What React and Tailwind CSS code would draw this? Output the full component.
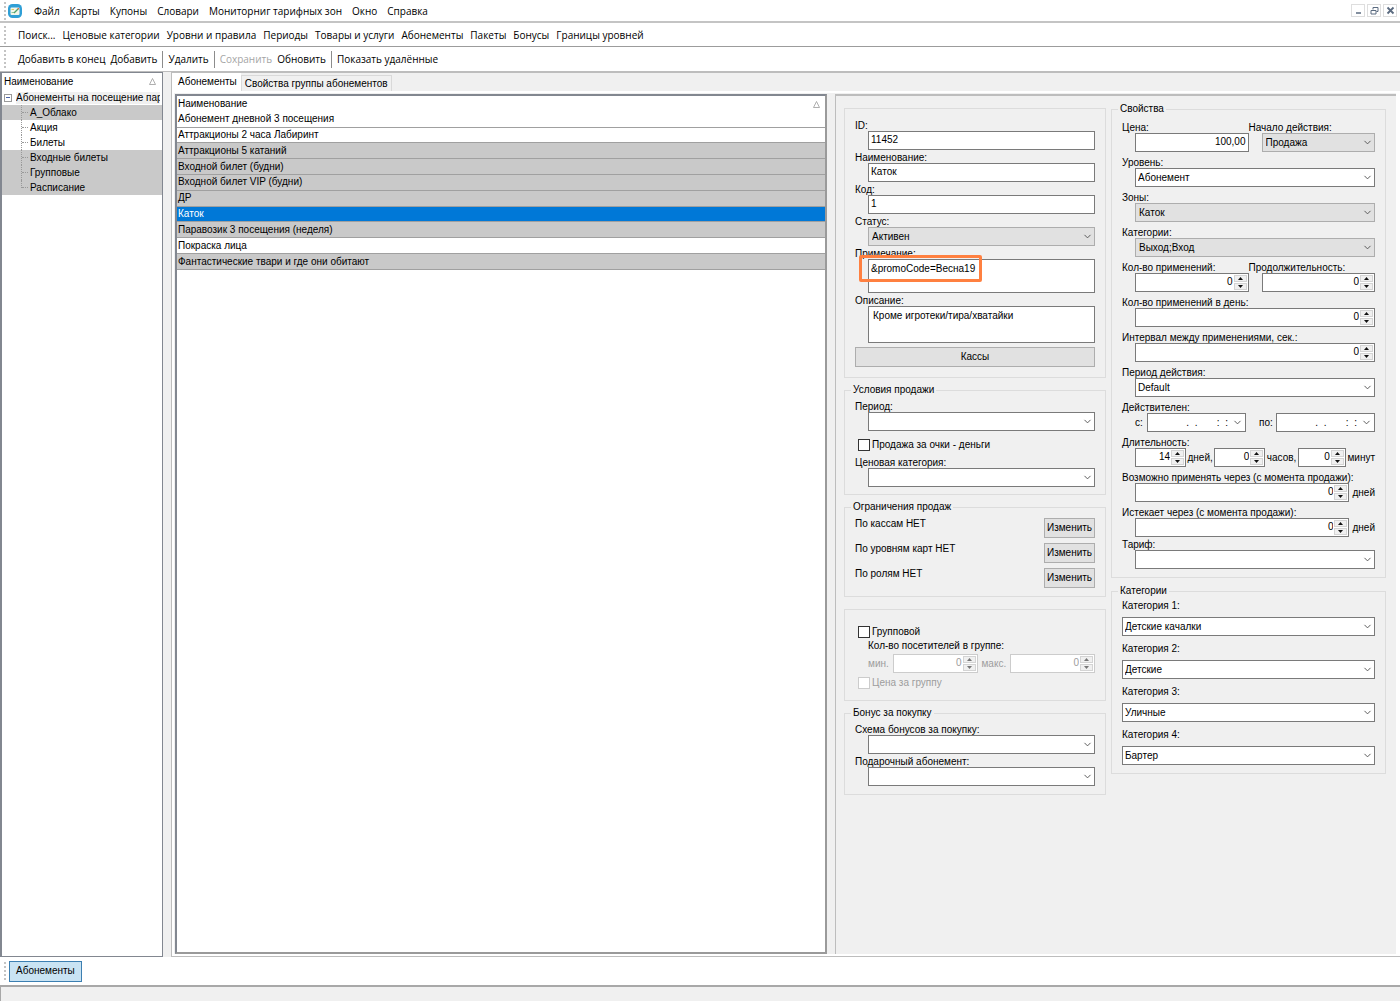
import React from "react";
import { ChevronDown } from "lucide-react";
import clsx from "clsx";

const MENU = ["Файл", "Карты", "Купоны", "Словари", "Мониторниг тарифных зон", "Окно", "Справка"];

const SECTIONS = [
  "Поиск...",
  "Ценовые категории",
  "Уровни и правила",
  "Периоды",
  "Товары и услуги",
  "Абонементы",
  "Пакеты",
  "Бонусы",
  "Границы уровней",
];

const TREE = [
  { name: "А_Облако", grey: true },
  { name: "Акция" },
  { name: "Билеты" },
  { name: "Входные билеты", grey: true },
  { name: "Групповые", grey: true },
  { name: "Расписание", grey: true },
];

const ROWS = [
  { name: "Абонемент дневной 3 посещения" },
  { name: "Аттракционы 2 часа Лабиринт" },
  { name: "Аттракционы 5 катаний", grey: true },
  { name: "Входной билет (будни)", grey: true },
  { name: "Входной билет VIP (будни)", grey: true },
  { name: "ДР", grey: true },
  { name: "Каток", selected: true },
  { name: "Паравозик 3 посещения (неделя)", grey: true },
  { name: "Покраска лица" },
  { name: "Фантастические твари и где они обитают", grey: true },
];

const LIMITS = ["По кассам НЕТ", "По уровням карт НЕТ", "По ролям НЕТ"];

const CATEGORIES = ["Детские качалки", "Детские", "Уличные", "Бартер"];

function Grip() {
  return <span className="ml-1 h-[18px] border-l-2 border-dotted border-[#c4c4c4]" />;
}

function Logo() {
  return (
    <svg width="14" height="14" viewBox="0 0 14 14" aria-hidden="true">
      <rect width="14" height="14" rx="4.5" fill="#2f9fd6" />
      <rect x="2.5" y="3.5" width="9" height="7.5" rx="1" fill="#f2f7ea" />
      <path d="M3.5 5.5h2.5" stroke="#e6c95c" />
      <path d="M3.5 8.5h3" stroke="#8fc7a0" />
      <path d="M6 9l4-4" stroke="#4f9f6a" strokeWidth="1.3" />
      <path d="M9.8 5.2l1-1" stroke="#d9643c" strokeWidth="1.3" />
    </svg>
  );
}

function SortMark() {
  return (
    <svg width="7" height="7" viewBox="0 0 7 7" aria-hidden="true">
      <path d="M3.5 0.5L6.5 6.5H0.5Z" fill="none" stroke="#9a9a9a" strokeWidth="0.8" />
    </svg>
  );
}

function WindowButton({ label, children }) {
  return (
    <button aria-label={label} className="flex h-[13px] w-[14px] items-center justify-center border border-[#dedede] bg-white">
      <svg width="9" height="9" viewBox="0 0 9 9" fill="none" stroke="#5b6b80">
        {children}
      </svg>
    </button>
  );
}

function ToolButton({ children, disabled }) {
  return (
    <button disabled={disabled} className="whitespace-nowrap disabled:text-[#a5a5a5]">
      {children}
    </button>
  );
}

function Divider() {
  return <span className="h-[17px] w-px bg-[#8c8c8c]" />;
}

// Label on top, control shifted to the right under it
function Field({ label, id, children }) {
  return (
    <div className="min-w-0">
      <label htmlFor={id} className="block h-[11px] whitespace-nowrap">
        {label}
      </label>
      <div className="ml-[13px] flex items-center">{children}</div>
    </div>
  );
}

function TextInput({ id, value, right }) {
  return (
    <input
      id={id}
      defaultValue={value}
      className={clsx("h-[19px] w-full min-w-0 border border-[#7a7a7a] bg-white px-0.5 pb-0.5", right && "text-right")}
    />
  );
}

function Select({ id, value = "", flat, label }) {
  return (
    <div className="relative w-full min-w-0">
      <select
        id={id}
        aria-label={label}
        defaultValue={value}
        className={clsx(
          "block h-[19px] w-full appearance-none border pr-4",
          flat ? "border-[#adadad] bg-[#e1e1e1] pl-[3px]" : "border-[#7a7a7a] bg-white pl-0.5"
        )}
      >
        <option>{value}</option>
      </select>
      <ChevronDown size={11} strokeWidth={2} color="#505050" className="pointer-events-none absolute top-1 right-0.5" />
    </div>
  );
}

function Spin({ id, value, label, disabled, className = "w-full" }) {
  return (
    <div className={clsx("flex h-[19px] min-w-0 border bg-white", disabled ? "border-[#cccccc]" : "border-[#7a7a7a]", className)}>
      <input
        id={id}
        aria-label={label}
        inputMode="numeric"
        defaultValue={value}
        disabled={disabled}
        className="w-0 flex-1 bg-white pr-px pb-0.5 text-right disabled:text-[#9d9d9d]"
      />
      <span className="flex w-[14px] flex-col gap-px py-px pr-px">
        <button aria-label="Больше" disabled={disabled} className="flex flex-1 items-center justify-center border border-[#d4d4d4] bg-[#f0f0f0]">
          <svg width="5" height="3" viewBox="0 0 5 3" fill={disabled ? "#777777" : "#111111"}>
            <path d="M2.5 0L5 3H0Z" />
          </svg>
        </button>
        <button aria-label="Меньше" disabled={disabled} className="flex flex-1 items-center justify-center border border-[#d4d4d4] bg-[#f0f0f0]">
          <svg width="5" height="3" viewBox="0 0 5 3" fill={disabled ? "#777777" : "#111111"}>
            <path d="M0 0H5L2.5 3Z" />
          </svg>
        </button>
      </span>
    </div>
  );
}

function DateInput({ id }) {
  return (
    <div className="flex h-[19px] min-w-0 flex-1 items-center border border-[#7a7a7a] bg-white">
      <input id={id} defaultValue=".  .       :  :" className="h-full w-0 flex-1 bg-white pr-1 text-right" />
      <button aria-label="Календарь" className="pr-0.5">
        <ChevronDown size={11} strokeWidth={2} color="#505050" />
      </button>
    </div>
  );
}

function Check({ id, children, disabled }) {
  return (
    <div className={clsx("ml-[3px] flex h-[13px] items-center gap-0.5", disabled && "text-[#9d9d9d]")}>
      <input
        id={id}
        type="checkbox"
        disabled={disabled}
        className="size-3 appearance-none border border-[#333333] bg-white checked:bg-[#0078d7] disabled:border-[#cccccc]"
      />
      <label htmlFor={id}>{children}</label>
    </div>
  );
}

function Group({ title, className, children }) {
  return (
    <fieldset className={clsx("min-w-0 border border-[#dcdcdc] px-2.5", className)}>
      {title && <legend className="-ml-1 px-[2px]">{title}</legend>}
      {children}
    </fieldset>
  );
}

function SaleColumn() {
  return (
    <div className="flex flex-col gap-1.5 pt-3">
      <Group className="pt-[11px] pb-2.5">
        <div className="flex flex-col gap-0.5">
          <Field label="ID:" id="id">
            <TextInput id="id" value="11452" />
          </Field>
          <Field label="Наименование:" id="name">
            <TextInput id="name" value="Каток" />
          </Field>
          <Field label="Код:" id="code">
            <TextInput id="code" value="1" />
          </Field>
          <Field label="Статус:" id="status">
            <Select id="status" value="Активен" flat />
          </Field>
          <Field label="Примечание:" id="note">
            <div className="relative w-full">
              <textarea id="note" defaultValue="&promoCode=Весна19" className="block h-[34px] w-full resize-none border border-[#7a7a7a] bg-white px-0.5 py-[3px]" />
              <span className="pointer-events-none absolute -top-1 -left-[9px] h-[27px] w-[123px] rounded-xs border-3 border-[#ff8040]" />
            </div>
          </Field>
          <Field label="Описание:" id="descr">
            <textarea id="descr" defaultValue="Кроме игротеки/тира/хватайки" className="block h-[37px] w-full resize-none border border-[#7a7a7a] bg-white px-1 py-[3px]" />
          </Field>
        </div>
        <button className="mt-1 block h-5 w-full border border-[#adadad] bg-[#e1e1e1]">Кассы</button>
      </Group>

      <Group title="Условия продажи" className="pt-[5px] pb-[7px]">
        <Field label="Период:" id="period">
          <Select id="period" />
        </Field>
        <div className="pt-[7px] pb-1.5">
          <Check id="points">Продажа за очки - деньги</Check>
        </div>
        <Field label="Ценовая категория:" id="pricecat">
          <Select id="pricecat" />
        </Field>
      </Group>

      <Group title="Ограничения продаж" className="pt-[5px] pb-2">
        <div className="flex flex-col gap-[5px]">
          {LIMITS.map((text) => (
            <div key={text} className="flex items-start justify-between">
              <span>{text}</span>
              <button className="h-5 w-[51px] border border-[#adadad] bg-[#e1e1e1]">Изменить</button>
            </div>
          ))}
        </div>
      </Group>

      <Group className="mt-1.5 pt-[15px] pb-[11px]">
        <Check id="grouped">Групповой</Check>
        <div className="my-0.5 ml-[13px]">Кол-во посетителей в группе:</div>
        <div className="mb-[3px] ml-[13px] flex items-center justify-between text-[#9d9d9d]">
          <label htmlFor="gmin">мин.</label>
          <Spin id="gmin" value="0" disabled className="w-[85px]" />
          <label htmlFor="gmax">макс.</label>
          <Spin id="gmax" value="0" disabled className="w-[85px]" />
        </div>
        <Check id="groupprice" disabled>
          Цена за группу
        </Check>
      </Group>

      <Group title="Бонус за покупку" className="pt-[5px] pb-2">
        <div className="flex flex-col gap-0.5">
          <Field label="Схема бонусов за покупку:" id="scheme">
            <Select id="scheme" />
          </Field>
          <Field label="Подарочный абонемент:" id="gift">
            <Select id="gift" />
          </Field>
        </div>
      </Group>
    </div>
  );
}

function PropertiesColumn() {
  return (
    <div className="flex flex-col gap-[7px] pt-[7px]">
      <Group title="Свойства" className="pt-[7px] pb-2">
        <div className="flex flex-col gap-[5px]">
          <div className="grid grid-cols-2">
            <Field label="Цена:" id="price">
              <TextInput id="price" value="100,00" right />
            </Field>
            <Field label="Начало действия:" id="start">
              <Select id="start" value="Продажа" flat />
            </Field>
          </div>
          <Field label="Уровень:" id="level">
            <Select id="level" value="Абонемент" />
          </Field>
          <Field label="Зоны:" id="zones">
            <Select id="zones" value="Каток" flat />
          </Field>
          <Field label="Категории:" id="cats">
            <Select id="cats" value="Выход;Вход" flat />
          </Field>
          <div className="grid grid-cols-2">
            <Field label="Кол-во применений:" id="uses">
              <Spin id="uses" value="0" />
            </Field>
            <Field label="Продолжительность:" id="duration">
              <Spin id="duration" value="0" />
            </Field>
          </div>
          <Field label="Кол-во применений в день:" id="daily">
            <Spin id="daily" value="0" />
          </Field>
          <Field label="Интервал между применениями, сек.:" id="interval">
            <Spin id="interval" value="0" />
          </Field>
          <Field label="Период действия:" id="valid">
            <Select id="valid" value="Default" />
          </Field>
          <Field label="Действителен:" id="from">
            <label htmlFor="from" className="w-3">
              с:
            </label>
            <DateInput id="from" />
            <label htmlFor="to" className="w-[30px] pl-[13px]">
              по:
            </label>
            <DateInput id="to" />
          </Field>
          <Field label="Длительность:" id="days">
            <div className="flex w-full items-center justify-between">
              <Spin id="days" value="14" className="w-[51px]" />
              <span>дней,</span>
              <Spin label="часов" value="0" className="w-[51px]" />
              <span>часов,</span>
              <Spin label="минут" value="0" className="w-12" />
              <span>минут</span>
            </div>
          </Field>
          <Field label="Возможно применять через (с момента продажи):" id="after">
            <Spin id="after" value="0" className="flex-1" />
            <span className="ml-[3px]">дней</span>
          </Field>
          <Field label="Истекает через (с момента продажи):" id="expires">
            <Spin id="expires" value="0" className="flex-1" />
            <span className="ml-[3px]">дней</span>
          </Field>
        </div>
        <div className="mt-0.5">
          <Field label="Тариф:" id="tariff">
            <Select id="tariff" />
          </Field>
        </div>
      </Group>

      <Group title="Категории" className="pt-[3px] pb-2">
        <div className="flex flex-col gap-[7px]">
          {CATEGORIES.map((value, i) => (
            <div key={value} className="flex flex-col gap-[5px]">
              <label htmlFor={`category${i}`}>Категория {i + 1}:</label>
              <Select id={`category${i}`} value={value} />
            </div>
          ))}
        </div>
      </Group>
    </div>
  );
}

function Tree() {
  return (
    <aside className="w-[163px] shrink-0 overflow-hidden border border-l-2 border-[#828790] bg-white">
      <div className="flex h-[17px] items-center justify-between pr-1.5 pl-0.5">
        <span>Наименование</span>
        <SortMark />
      </div>
      <div className="flex h-[15px] items-center gap-1 pr-0.5 pl-0.5">
        <button aria-label="Свернуть" className="flex size-2 shrink-0 items-center justify-center border border-[#9a9a9a]">
          <span className="h-px w-1 bg-[#4b63a7]" />
        </button>
        <span className="overflow-hidden bg-[#f0f0f0] whitespace-nowrap">Абонементы на посещение парка</span>
      </div>
      <ul>
        {TREE.map((item, i) => (
          <li key={item.name} className={clsx("flex h-[15px] items-center pl-[19px]", item.grey && "bg-[#c9c9c9]")}>
            <span className={clsx("border-l border-dotted border-[#999999]", i === TREE.length - 1 ? "h-2 self-start" : "h-full")} />
            <span className="mr-0.5 w-1.5 border-t border-dotted border-[#999999]" />
            <span>{item.name}</span>
          </li>
        ))}
      </ul>
    </aside>
  );
}

function SubscriptionList() {
  return (
    <div className="min-w-0 flex-1 border-2 border-[#828790] border-r-[#9a9a9a] border-b-[#9a9a9a] bg-white">
      <table className="h-[174px] w-full border-collapse">
        <thead>
          <tr>
            <th className="h-4 p-0 pl-px text-left font-normal">
              <div className="flex items-center justify-between pr-[5px]">
                Наименование
                <SortMark />
              </div>
            </th>
          </tr>
        </thead>
        <tbody>
          {ROWS.map((row) => (
            <tr
              key={row.name}
              className={clsx(
                "border-b border-[#a0a0a0]",
                row.grey && "bg-[#c9c9c9]",
                row.selected && "bg-[#0078d7] text-white"
              )}
            >
              <td className="p-0 pl-px">{row.name}</td>
            </tr>
          ))}
        </tbody>
      </table>
    </div>
  );
}

export default function App() {
  return (
    <div className="flex min-h-screen flex-col bg-white font-['Liberation_Sans',Arial,sans-serif] text-[10px] leading-3 text-black">
      <header className="font-['Open_Sans','Noto_Sans',sans-serif] text-[10px] leading-4">
        <nav className="flex h-[23px] items-center border-b-2 border-[#c4c4c4]">
          <Grip />
          <span className="mr-3 ml-0.5">
            <Logo />
          </span>
          <div className="flex flex-1 items-center gap-2.5">
            {MENU.map((item) => (
              <button key={item} className="whitespace-nowrap">
                {item}
              </button>
            ))}
          </div>
          <div className="flex gap-0.5 pr-[3px]">
            <WindowButton label="Свернуть">
              <path d="M2 7h5" strokeWidth="1.5" />
            </WindowButton>
            <WindowButton label="Восстановить">
              <path d="M3 3.5V1.5H8V5.5H6.5M1 4.5H6V8H1ZM3 1.5H8M1 4.5H6" />
            </WindowButton>
            <WindowButton label="Закрыть">
              <path d="M1.5 1.5L7.5 7.5M7.5 1.5L1.5 7.5" strokeWidth="1.8" />
            </WindowButton>
          </div>
        </nav>
        <nav className="flex h-6 items-center gap-[7px] border-b border-[#9c9c9c]">
          <span className="flex w-[11px]">
            <Grip />
          </span>
          {SECTIONS.map((item) => (
            <ToolButton key={item}>{item}</ToolButton>
          ))}
        </nav>
        <div className="flex h-6 items-center gap-[5px]">
          <span className="flex w-[13px]">
            <Grip />
          </span>
          <ToolButton>Добавить в конец</ToolButton>
          <ToolButton>Добавить</ToolButton>
          <Divider />
          <ToolButton>Удалить</ToolButton>
          <Divider />
          <ToolButton disabled>Сохранить</ToolButton>
          <ToolButton>Обновить</ToolButton>
          <Divider />
          <ToolButton>Показать удалённые</ToolButton>
        </div>
      </header>

      <main className="flex flex-1 border-t border-[#bdbdbd] bg-[#f0f0f0]">
        <Tree />
        <section className="ml-2 flex min-w-0 flex-1 flex-col border border-r-0 border-[#bdbdbd]">
          <div role="tablist" className="flex h-[18px] items-end">
            <button role="tab" aria-selected="true" className="h-full bg-white pr-1 pl-1.5">
              Абонементы
            </button>
            <button role="tab" aria-selected="false" className="h-4 border border-b-0 border-[#d9d9d9] px-[3px]">
              Свойства группы абонементов
            </button>
          </div>
          <div className="flex flex-1 gap-2 border-2 border-r-4 border-white bg-[#f0f0f0] pt-px pl-px">
            <SubscriptionList />
            <div className="w-[561px] shrink-0 border-t-2 border-l border-[#bdbdbd] pl-2">
              <div className="grid grid-cols-[262px_275px] items-start gap-[5px]">
                <SaleColumn />
                <PropertiesColumn />
              </div>
            </div>
          </div>
        </section>
      </main>

      <footer>
        <div className="flex h-7 items-center">
          <Grip />
          <button className="ml-[3px] h-[21px] border border-[#3c7fb1] bg-[#c9e3f3] px-1.5">Абонементы</button>
        </div>
        <div className="h-4 border-t-2 border-l border-[#a8a8a8] bg-[#f0f0f0]" />
      </footer>
    </div>
  );
}
